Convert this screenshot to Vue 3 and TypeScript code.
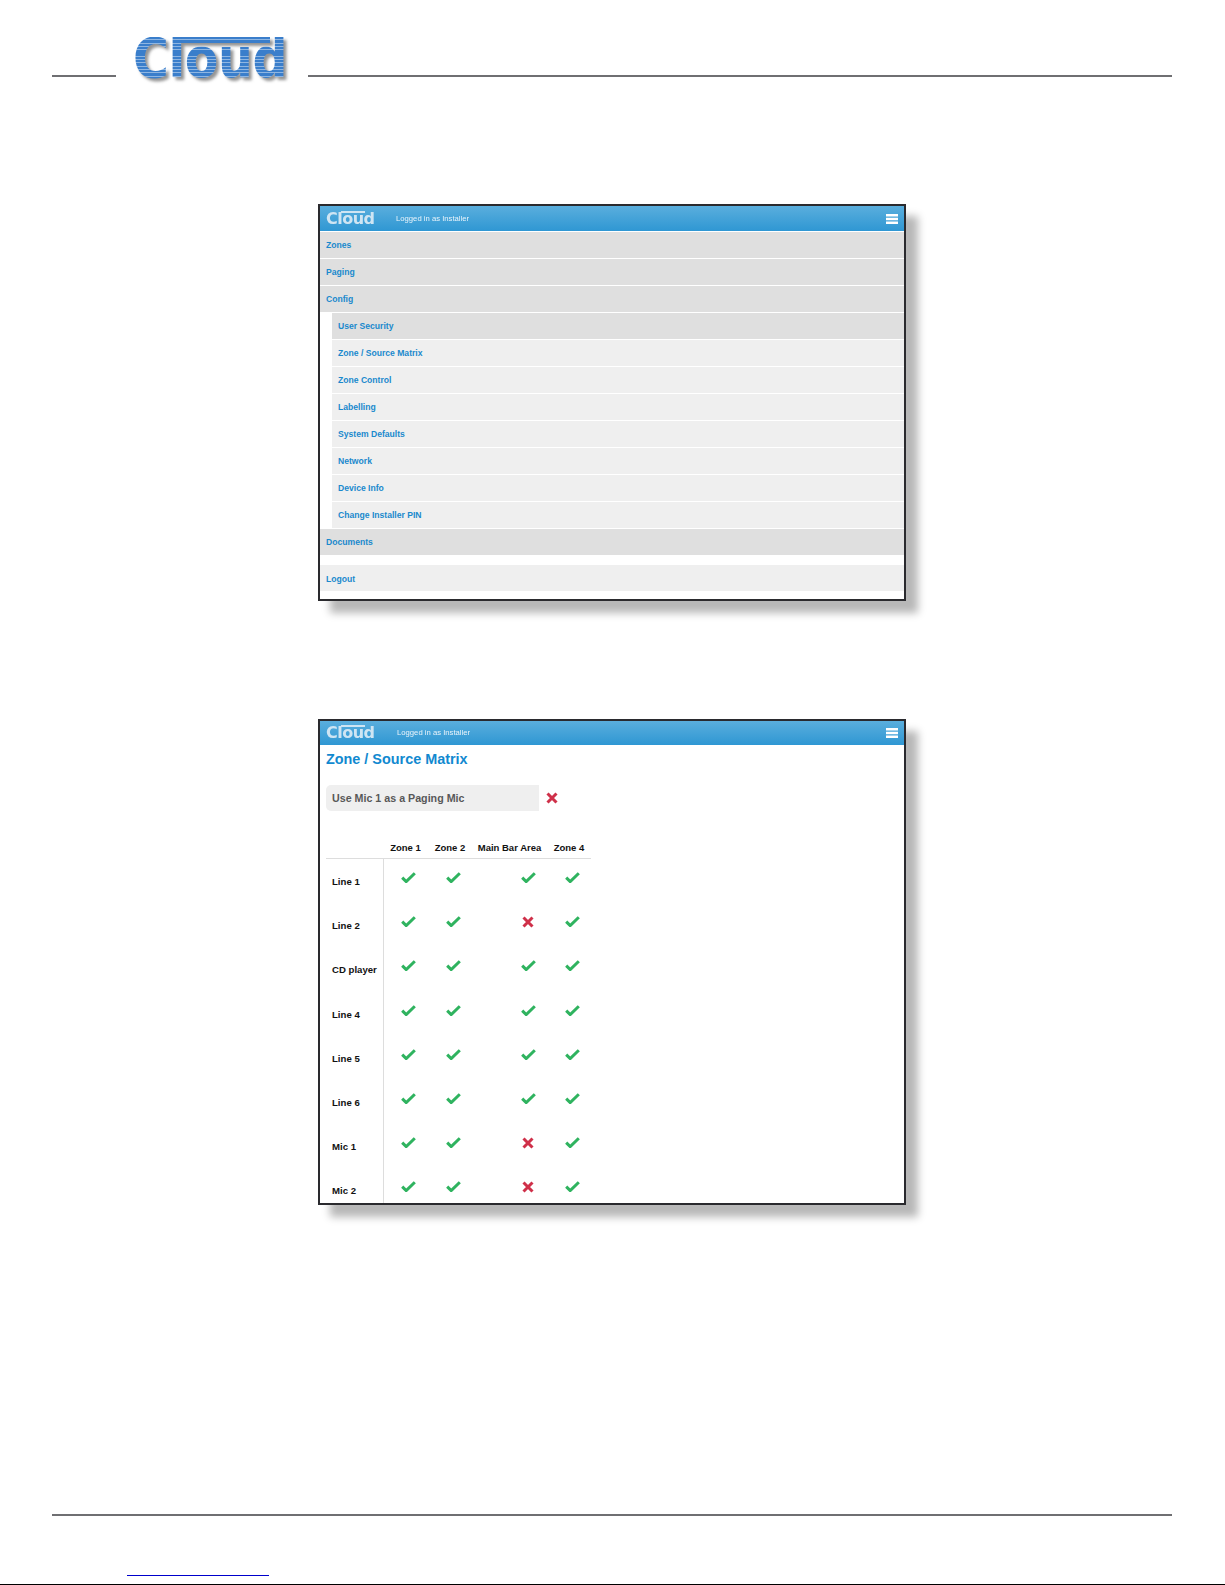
<script setup lang="ts">
const mainItems = ['Zones', 'Paging', 'Config']
const subItems = ['User Security', 'Zone / Source Matrix', 'Zone Control', 'Labelling', 'System Defaults', 'Network', 'Device Info', 'Change Installer PIN']
const zones = ['Zone 1', 'Zone 2', 'Main Bar Area', 'Zone 4']
const matrix: { label: string; on: boolean[] }[] = [
  { label: 'Line 1', on: [true, true, true, true] },
  { label: 'Line 2', on: [true, true, false, true] },
  { label: 'CD player', on: [true, true, true, true] },
  { label: 'Line 4', on: [true, true, true, true] },
  { label: 'Line 5', on: [true, true, true, true] },
  { label: 'Line 6', on: [true, true, true, true] },
  { label: 'Mic 1', on: [true, true, false, true] },
  { label: 'Mic 2', on: [true, true, false, true] },
]
</script>

<template>
  <div class="page">
    <header class="masthead">
      <div class="rule rule-short"></div>
      <div class="brand"><span class="brand-bar"></span><span class="brand-text">Cloud</span></div>
      <div class="rule rule-long"></div>
    </header>

    <section class="frame frame-menu">
      <div class="appbar">
        <div class="mini-logo"><span class="mini-bar"></span>Cloud</div>
        <span class="login">Logged in as Installer</span>
        <svg class="burger" width="12" height="10" viewBox="0 0 12 10"><path d="M0 0h12v2.4H0zM0 3.8h12v2.4H0zM0 7.6h12V10H0z" fill="#fff" /></svg>
      </div>
      <nav class="menu">
        <a v-for="m in mainItems" :key="m" class="item item-main">{{ m }}</a>
        <a v-for="(s, i) in subItems" :key="s" class="item item-sub" :class="{ 'item-active': i === 0 }">{{ s }}</a>
        <a class="item item-main">Documents</a>
        <a class="item item-logout">Logout</a>
      </nav>
    </section>

    <section class="frame frame-matrix">
      <div class="matrix-clip">
        <div class="appbar appbar-short">
          <div class="mini-logo"><span class="mini-bar"></span>Cloud</div>
          <span class="login login-b">Logged in as Installer</span>
          <svg class="burger" width="12" height="10" viewBox="0 0 12 10"><path d="M0 0h12v2.4H0zM0 3.8h12v2.4H0zM0 7.6h12V10H0z" fill="#fff" /></svg>
        </div>
        <h1 class="title">Zone / Source Matrix</h1>
        <div class="option">
          <div class="option-label">Use Mic 1 as a Paging Mic</div>
          <svg class="mark-x big" width="12" height="12" viewBox="0 0 12 12"><path d="M1.5 1.5l9 9M10.5 1.5l-9 9" /></svg>
        </div>
        <div class="grid-head">
          <span></span>
          <span v-for="z in zones" :key="z">{{ z }}</span>
        </div>
        <div v-for="row in matrix" :key="row.label" class="grid-row">
          <div class="row-label">{{ row.label }}</div>
          <div v-for="(v, i) in row.on" :key="i" class="cell">
            <svg v-if="v" class="mark-check" width="15" height="11" viewBox="0 0 15 11"><path d="M1.2 5.6l4 4 8.6-8.4" /></svg>
            <svg v-else class="mark-x" width="12" height="12" viewBox="0 0 12 12"><path d="M1.5 1.5l9 9M10.5 1.5l-9 9" /></svg>
          </div>
        </div>
      </div>
    </section>

    <footer class="foot">
      <div class="rule"></div>
      <div class="link-line"></div>
    </footer>
    <div class="edge"></div>
  </div>
</template>

<style>
html, body { margin: 0; background: #fff; }
</style>

<style scoped>
.page {
  width: 1225px;
  height: 1585px;
  background: #fff;
  overflow: hidden;
  display: flex;
  flex-direction: column;
  font-family: "Liberation Sans", Arial, sans-serif;
}
.masthead {
  height: 77px;
  margin: 0 53px 0 52px;
  display: flex;
  align-items: flex-end;
  position: relative;
}
.rule { height: 2px; background: #6f6f72; }
.rule-short { width: 64px; }
.rule-long { flex: 1; margin-left: 192px; }
.brand {
  position: absolute;
  left: 81px;
  top: 37px;
  height: 42px;
  filter: drop-shadow(3px 3px 1.5px rgba(90, 90, 90, 0.65)) blur(0.3px);
}
.brand-text {
  display: inline-block;
  width: max-content;
  font-family: "DejaVu Sans", sans-serif;
  font-weight: 700;
  font-size: 55px;
  line-height: 42px;
  letter-spacing: -0.5px;
  transform: scaleX(0.89);
  transform-origin: left top;
  white-space: nowrap;
  color: transparent;
  background: repeating-linear-gradient(#3a7ecb 0 2.4px, #8fb6e2 2.4px 3.3px);
  background-clip: text;
  -webkit-background-clip: text;
}
.brand-bar {
  position: absolute;
  left: 46px;
  top: 0;
  width: 91px;
  height: 6px;
  background: repeating-linear-gradient(#3a7ecb 0 2.4px, #8fb6e2 2.4px 3.3px);
}
.frame {
  margin-left: 318px;
  width: 588px;
  box-sizing: border-box;
  border: 2px solid #2a2a2e;
  background: #fff;
  box-shadow: 12px 12px 8px #b8b8b8;
}
.frame-menu { margin-top: 127px; height: 397px; }
.frame-matrix { margin-top: 118px; height: 486px; }
.matrix-clip { height: 100%; overflow: hidden; }
.appbar {
  height: 25px;
  background: linear-gradient(#5aaedd, #2f97d3);
  display: flex;
  align-items: center;
  padding: 0 6px 0 6px;
  color: #fff;
}
.appbar-short { height: 23px; padding-bottom: 1px; }
.mini-logo {
  position: relative;
  width: 70px;
  font-family: "DejaVu Sans", sans-serif;
  font-weight: 700;
  font-size: 16px;
  line-height: 20px;
  letter-spacing: -0.5px;
  color: #cfe5f3;
  filter: blur(0.3px);
}
.mini-bar {
  position: absolute;
  left: 15px;
  top: 2px;
  width: 24px;
  height: 2px;
  background: #cfe5f3;
}
.login { font-size: 7.7px; color: #e9f4fb; filter: blur(0.2px); }
.login-b { margin-left: 1px; }
.burger { margin-left: auto; }
.menu { display: flex; flex-direction: column; padding-top: 1px; gap: 1px; }
.item {
  height: 26px;
  display: flex;
  align-items: center;
  padding-left: 6px;
  font-size: 8.6px;
  font-weight: 700;
  color: #1a89cd;
}
.item-main { background: #dfdfdf; }
.item-sub { background: #efefef; margin-left: 12px; }
.item-active { background: #dfdfdf; }
.item-logout { background: #efefef; margin-top: 9px; padding-top: 2px; height: 24px; }
.title {
  margin: 5px 0 0 6px;
  font-size: 14.4px;
  line-height: 18px;
  font-weight: 700;
  color: #1189d0;
}
.option {
  margin: 17px 0 0 6px;
  display: flex;
  align-items: center;
}
.option-label {
  width: 207px;
  height: 26px;
  line-height: 26px;
  padding-left: 6px;
  background: #efefef;
  border-radius: 5px 0 0 5px;
  font-size: 10.7px;
  font-weight: 700;
  color: #585858;
}
.grid-head, .grid-row {
  display: grid;
  grid-template-columns: 58px 45px 44px 76px 42px;
  margin-left: 6px;
  width: 265px;
}
.grid-head {
  grid-template-columns: 57px 45px 44px 75px 44px;
  margin-top: 28px;
  height: 19px;
  border-bottom: 1px solid #dddddd;
  font-size: 9.5px;
  font-weight: 700;
  color: #111;
  text-align: center;
  line-height: 18px;
  white-space: nowrap;
}
.grid-row { height: 44.2px; }
.row-label {
  border-right: 1px solid #dddddd;
  padding: 16px 0 0 6px;
  font-size: 9.6px;
  line-height: 14px;
  font-weight: 700;
  color: #111;
  white-space: nowrap;
}
.cell { padding-top: 13px; line-height: 0; }
.cell:nth-child(2) { padding-left: 17px; }
.cell:nth-child(3) { padding-left: 17px; }
.cell:nth-child(4) { padding-left: 48px; }
.cell:nth-child(5) { padding-left: 16px; }
.mark-check path { fill: none; stroke: #2fb35f; stroke-width: 3; }
.mark-x path { fill: none; stroke: #cf3049; stroke-width: 3; }
.mark-x { margin: 0 0 0 1px; }
.big.mark-x { margin: 0 0 0 7px; }
.foot { margin: 309px 53px 0 52px; }
.link-line {
  width: 142px;
  height: 1px;
  margin: 59px 0 0 75px;
  background: #0000cc;
}
.edge { margin-top: 8px; height: 1px; background: #000; }
</style>
